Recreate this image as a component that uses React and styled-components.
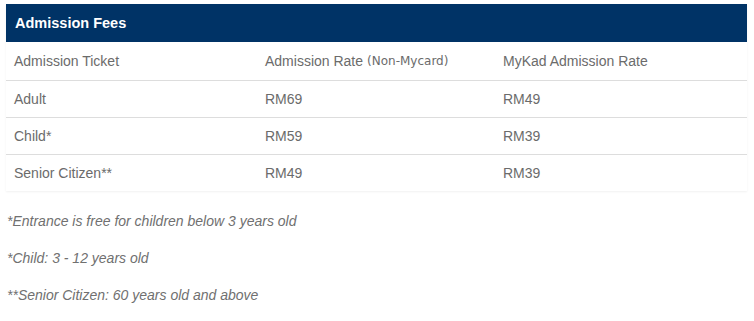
import React from 'react';
import styled, {createGlobalStyle} from 'styled-components';

const Global = createGlobalStyle`
  body {
    margin: 0;
    background: #ffffff;
    font-family: 'Liberation Sans', Arial, sans-serif;
  }
`;

const Page = styled.div`
  padding: 4px 7px 0 6px;
`;

const Table = styled.div`
  width: 741px;
  box-shadow: 0 1px 2px rgba(0, 0, 0, 0.06);
`;

const Title = styled.div`
  height: 38px;
  display: flex;
  align-items: center;
  padding-left: 9px;
  background: #003366;
  color: #ffffff;
  font: bold 14.5px 'Liberation Sans', Arial, sans-serif;
`;

const Row = styled.div`
  display: grid;
  grid-template-columns: 251px 238px 1fr;
  height: ${props => props.first ? 38 : 37}px;
  border-top: ${props => props.first ? 'none' : '1px solid #dddddd'};
  box-sizing: border-box;
`;

const Cell = styled.div`
  display: flex;
  align-items: center;
  padding-left: 8px;
  color: #6b6b6b;
  font: 14px 'Liberation Sans', Arial, sans-serif;
`;

const Small = styled.span`
  font: 12px 'DejaVu Sans', Verdana, sans-serif;
  margin-left: 4px;
  color: #6b6b6b;
`;

const Notes = styled.div`
  padding: 22px 0 0 1px;
  display: flex;
  flex-direction: column;
  gap: 21px;
`;

const Note = styled.div`
  font: italic 14px 'Liberation Sans', Arial, sans-serif;
  color: #707070;
  line-height: 16px;
`;

const rows = [
  ['Adult', 'RM69', 'RM49'],
  ['Child*', 'RM59', 'RM39'],
  ['Senior Citizen**', 'RM49', 'RM39'],
];

export default function App() {
  return (
    <Page>
      <Global />
      <Table>
        <Title>Admission Fees</Title>
        <Row first>
          <Cell>Admission Ticket</Cell>
          <Cell>Admission Rate<Small>(Non-Mycard)</Small></Cell>
          <Cell>MyKad Admission Rate</Cell>
        </Row>
        {rows.map(r => (
          <Row key={r[0]}>
            {r.map(c => <Cell key={c}>{c}</Cell>)}
          </Row>
        ))}
      </Table>
      <Notes>
        <Note>*Entrance is free for children below 3 years old</Note>
        <Note>*Child: 3 - 12 years old</Note>
        <Note>**Senior Citizen: 60 years old and above</Note>
      </Notes>
    </Page>
  );
}
